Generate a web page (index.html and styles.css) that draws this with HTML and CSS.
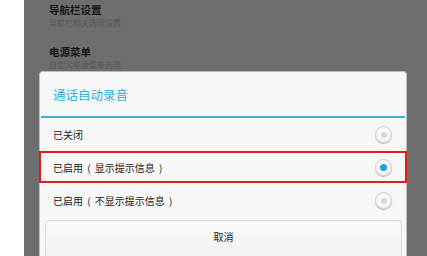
FILE: index.html
```html
<!DOCTYPE html>
<html lang="zh-CN">
<head>
<meta charset="utf-8">
<link rel="stylesheet" href="styles.css">
</head>
<body>
<div class="screen">
  <div class="bg-item first">
    <div class="bg-title">导航栏设置</div>
    <div class="bg-sub">导航栏相关选项设置</div>
  </div>
  <div class="bg-divider"></div>
  <div class="bg-item second">
    <div class="bg-title">电源菜单</div>
    <div class="bg-sub">自定义电源菜单选项</div>
  </div>
  <div class="dialog">
    <div class="dlg-title">通话自动录音</div>
    <div class="dlg-line"></div>
    <div class="row"><span class="label">已关闭</span><span class="radio"></span></div>
    <div class="row marked"><span class="label">已启用 ( 显示提示信息 )</span><span class="radio on"></span></div>
    <div class="row"><span class="label">已启用 ( 不显示提示信息 )</span><span class="radio"></span></div>
    <div class="btn">取消</div>
  </div>
</div>
</body>
</html>
```
FILE: styles.css
```css
html, body {
  margin: 0;
  padding: 0;
  background: #ffffff;
  font-family: "Noto Sans CJK SC", "Noto Sans", sans-serif;
}
.screen {
  margin-left: 24px;
  width: 403px;
  height: 256px;
  background: #6e6e6e;
  overflow: hidden;
  display: flex;
  flex-direction: column;
}
.bg-item {
  padding-left: 25px;
}
.bg-item.first {
  padding-top: 3px;
}
.bg-item.second {
  padding-top: 8px;
}
.bg-title {
  font-size: 10.5px;
  line-height: 14px;
  font-weight: bold;
  color: #161616;
}
.bg-sub {
  font-size: 8px;
  line-height: 12px;
  color: #565656;
}
.bg-divider {
  margin: 8px 23px 0 19px;
  height: 1px;
  background: #5e5e5e;
}
.dialog {
  margin-left: 15px;
  width: 366px;
  flex: 1;
  border: 1px solid #bdbdbd;
  border-bottom: none;
  border-radius: 4px 4px 0 0;
  background: #f7f7f7;
  display: flex;
  flex-direction: column;
}
.dlg-title {
  padding: 15px 0 13px 13px;
  font-size: 12.5px;
  line-height: 16px;
  color: #35abd9;
}
.dlg-line {
  height: 2px;
  margin: 0 1px;
  background: #3bb2e0;
}
.row {
  height: 33px;
  display: flex;
  align-items: center;
  justify-content: space-between;
  padding: 0 14px 0 13px;
  position: relative;
}
.label {
  font-size: 10px;
  color: #222222;
  word-spacing: 2px;
}
.row.marked::after {
  content: "";
  position: absolute;
  left: -1px;
  right: -1px;
  top: 0;
  bottom: 1px;
  border: 2px solid #e31b1b;
}
.radio {
  width: 15px;
  height: 15px;
  border-radius: 50%;
  border: 1px solid #cfcfcf;
  background: radial-gradient(circle at 50% 40%, #ffffff 0%, #f2f2f2 70%, #e2e2e2 100%);
  box-shadow: 0 1px 1px rgba(0,0,0,0.25);
  display: flex;
  align-items: center;
  justify-content: center;
}
.radio::before {
  content: "";
  width: 6px;
  height: 6px;
  border-radius: 50%;
  background: #d6d6d6;
}
.radio.on::before {
  background: #1e9fe0;
  width: 7px;
  height: 7px;
}
.btn {
  margin: 3px 4px 0 5px;
  height: 40px;
  border: 1px solid #d8d8d8;
  border-radius: 3px;
  background: linear-gradient(#f9f9f9, #f1f1f1);
  display: flex;
  justify-content: center;
  padding-top: 9px;
  box-sizing: border-box;
  font-size: 10px;
  line-height: 14px;
  color: #222222;
}
```
